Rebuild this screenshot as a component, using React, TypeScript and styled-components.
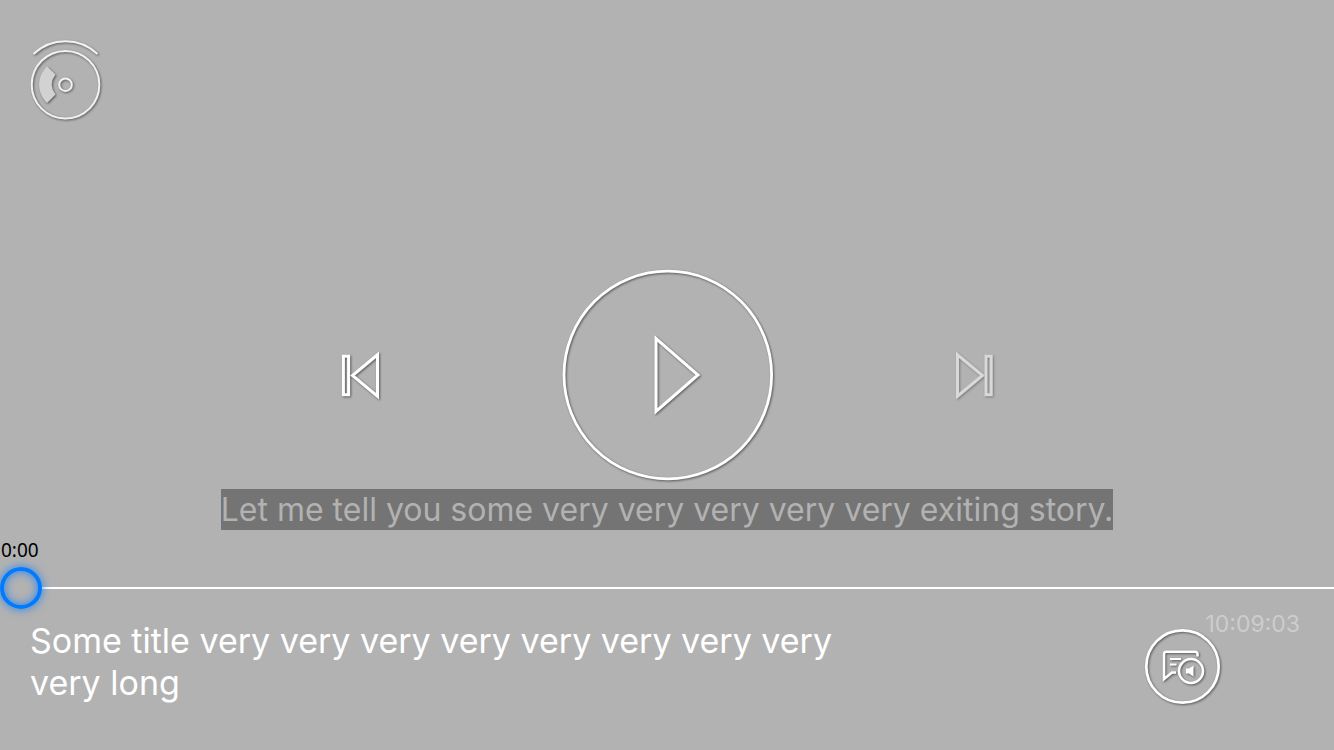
import React, { useState } from "react";
import styled, { createGlobalStyle } from "styled-components";

const GlobalStyle = createGlobalStyle`
  *, *::before, *::after { box-sizing: border-box; }
  body {
    margin: 0;
    background: #b2b2b2;
    font-family: Inter, "Liberation Sans", sans-serif;
  }
`;

const Player = styled.main`
  display: grid;
  grid-template-rows: 1fr auto 1fr;
  min-height: 100vh;
  color: #fff;
`;

const Header = styled.header`
  padding: 36px 24px 0;
`;

const IconButton = styled.button<{ $dim?: boolean }>`
  display: block;
  flex: none;
  padding: 0;
  border: 0;
  background: none;
  color: ${(p) => (p.$dim ? "#d9d9d9" : "#fff")};
  cursor: pointer;

  svg {
    display: block;
    fill: none;
    stroke: currentColor;
    overflow: visible;
    filter: drop-shadow(1px 1px 1px rgba(0, 0, 0, ${(p) => (p.$dim ? 0.3 : 0.5)}));
  }
`;

const Transport = styled.div`
  display: flex;
  align-items: center;
  justify-content: center;
  gap: 178px;
`;

const Bottom = styled.section`
  display: flex;
  flex-direction: column;
`;

const Subtitle = styled.p`
  align-self: center;
  margin: 8px 0 0;
  background: #747474;
  color: #b2b2b2;
  font-size: 32px;
  line-height: 41px;
`;

const Elapsed = styled.label`
  margin-top: 8px;
  padding-left: 1px;
  color: #000;
  font-family: "Noto Sans", sans-serif;
  font-size: 19px;
  line-height: 24px;
`;

const Seek = styled.input`
  appearance: none;
  display: block;
  width: 100%;
  height: 42px;
  margin: 5px 0 0;
  background: linear-gradient(
      to right,
      transparent var(--line-start),
      #fff var(--line-start)
    )
    center / 100% 2px no-repeat;
  cursor: pointer;

  &::-webkit-slider-thumb {
    appearance: none;
    width: 42px;
    height: 42px;
    border: 4px solid #007aff;
    border-radius: 50%;
    background: transparent;
    box-shadow: 0 0 10px rgba(0, 122, 255, 0.8),
      inset 0 0 10px rgba(0, 122, 255, 0.8);
  }
`;

const Footer = styled.footer`
  display: flex;
  align-items: flex-start;
  justify-content: space-between;
  padding: 11px 34px 0 30px;
`;

const Title = styled.h1`
  max-width: 820px;
  margin: 0;
  font-size: 34px;
  font-weight: 400;
  line-height: 42px;
`;

const Side = styled.div`
  display: flex;
  align-items: flex-start;
`;

const AudioButton = styled(IconButton)`
  margin-top: 8px;
`;

const Duration = styled.time`
  margin: -8px 0 0 -17px;
  color: #cdcdcd;
  font-size: 23px;
  line-height: 24px;
`;

const DiscIcon = () => (
  <svg width="84" height="90" viewBox="24 36 84 90" aria-hidden="true">
    <g stroke="#f2f2f2" strokeWidth="2">
      <path d="M33.5 54 A46.5 46.5 0 0 1 97.5 54" />
      <circle cx="65.5" cy="84.7" r="33.8" />
      <circle cx="65.5" cy="84.7" r="6.3" />
    </g>
    <path
      d="M47 66.5 L55.5 74.5 Q48 84.5 55.5 94.5 L47 103 C36.5 92 36.5 77 47 66.5Z"
      fill="#d2d2d2"
      stroke="none"
    />
  </svg>
);

const PreviousIcon = () => (
  <svg width="48" height="56" viewBox="335 347 48 56" aria-hidden="true">
    <rect x="343.4" y="356.2" width="5.2" height="38.5" strokeWidth="3" />
    <path d="M377.5 354.8 V396.2 L352.5 375.5 Z" strokeWidth="3" />
  </svg>
);

const NextIcon = () => (
  <svg width="48" height="56" viewBox="951 347 48 56" aria-hidden="true">
    <path d="M957.5 354.8 V396.2 L982.5 375.5 Z" strokeWidth="3" />
    <rect x="986" y="356.2" width="5.2" height="38.5" strokeWidth="3" />
  </svg>
);

const PlayIcon = () => (
  <svg width="212" height="212" viewBox="561 269 212 212" aria-hidden="true">
    <circle cx="667.8" cy="375" r="103.8" strokeWidth="2.8" />
    <path d="M656 338.5 V411.5 L698 375 Z" strokeWidth="3" />
  </svg>
);

const AudioTrackIcon = () => (
  <svg width="78" height="78" viewBox="1145 628 78 78" aria-hidden="true">
    <circle cx="1183.5" cy="666.5" r="36.2" strokeWidth="2.7" />
    <path
      d="M1198.5 656.5 V654 Q1198.5 651.7 1196.2 651.7 H1167.3 Q1165 651.7 1165 654 V679 L1173 672.5 H1177"
      strokeWidth="2.5"
    />
    <path d="M1171 659 H1182 M1171 664.5 H1177.5" strokeWidth="2" />
    <circle cx="1192" cy="671" r="12" strokeWidth="2.5" />
    <path
      d="M1187 668.5 H1190 L1194.5 665.5 V676.5 L1190 673.5 H1187 Z"
      fill="currentColor"
      stroke="none"
    />
  </svg>
);

const formatTime = (seconds: number) =>
  `${Math.floor(seconds / 60)}:${String(seconds % 60).padStart(2, "0")}`;

const DURATION = 36543;

export default function App() {
  const [position, setPosition] = useState(0);
  const ratio = position / DURATION;

  return (
    <>
      <GlobalStyle />
      <Player>
        <Header>
          <IconButton type="button" aria-label="Disc">
            <DiscIcon />
          </IconButton>
        </Header>

        <Transport>
          <IconButton type="button" aria-label="Previous">
            <PreviousIcon />
          </IconButton>
          <IconButton type="button" aria-label="Play">
            <PlayIcon />
          </IconButton>
          <IconButton type="button" aria-label="Next" $dim>
            <NextIcon />
          </IconButton>
        </Transport>

        <Bottom>
          <Subtitle>
            Let me tell you some very very very very very exiting story.
          </Subtitle>
          <Elapsed htmlFor="seek">{formatTime(position)}</Elapsed>
          <Seek
            id="seek"
            type="range"
            min={0}
            max={DURATION}
            value={position}
            onChange={(e) => setPosition(Number(e.target.value))}
            style={
              {
                "--line-start": `calc(42px + (100% - 42px) * ${ratio})`,
              } as React.CSSProperties
            }
          />
          <Footer>
            <Title>
              Some title very very very very very very very very very long
            </Title>
            <Side>
              <AudioButton type="button" aria-label="Audio and subtitles">
                <AudioTrackIcon />
              </AudioButton>
              <Duration>10:09:03</Duration>
            </Side>
          </Footer>
        </Bottom>
      </Player>
    </>
  );
}
